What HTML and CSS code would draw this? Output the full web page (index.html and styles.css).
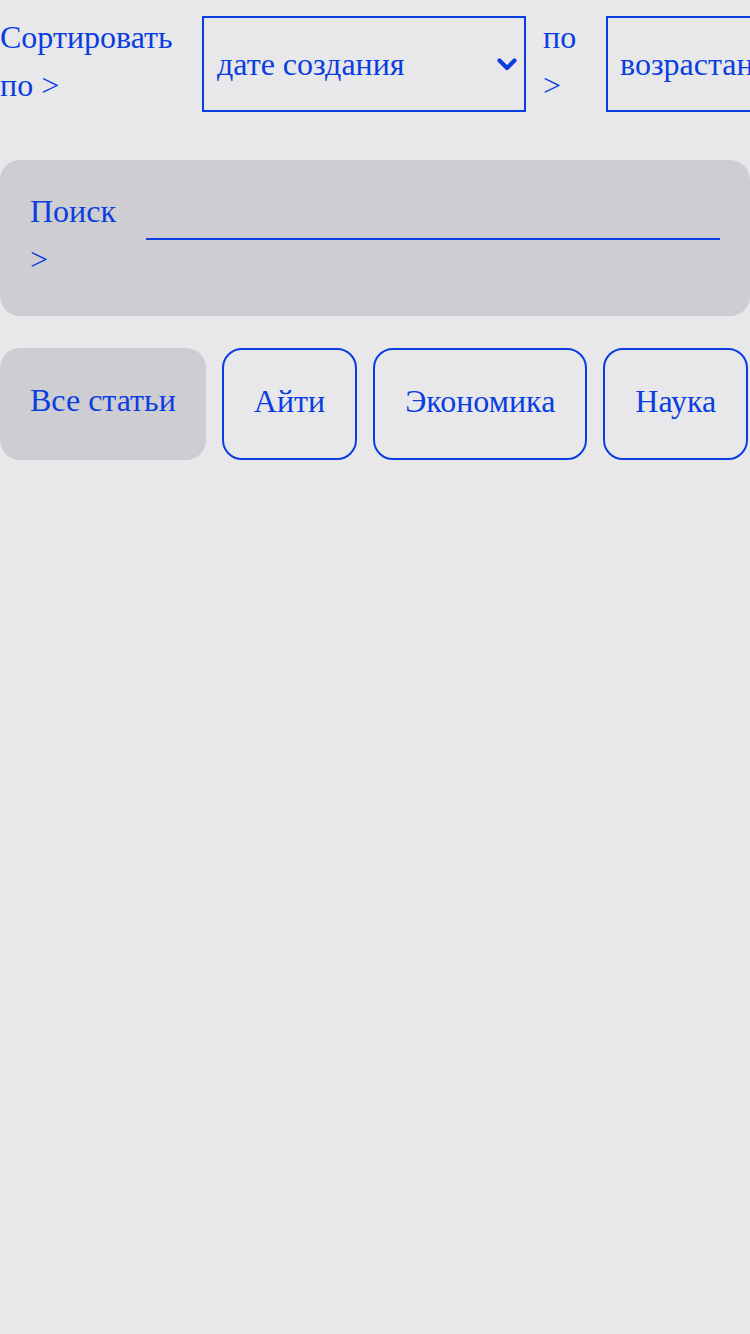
FILE: index.html
```html
<!DOCTYPE html>
<html lang="ru">
<head>
<meta charset="utf-8">
<title>Статьи</title>
<link rel="stylesheet" href="styles.css">
</head>
<body>
<div class="page">
  <div class="sort-row">
    <span class="sort-label">Сортировать по &gt;</span>
    <div class="select select-field">
      <span class="select-text">дате создания</span>
      <svg class="chevron" width="20" height="14" viewBox="0 0 20 14"><polyline points="2.5,2.5 10,10 17.5,2.5" fill="none" stroke="#0a3ee0" stroke-width="4.2" stroke-linecap="round" stroke-linejoin="round"/></svg>
    </div>
    <span class="sort-label by-label">по &gt;</span>
    <div class="select select-order">
      <span class="select-text">возрастанию</span>
    </div>
  </div>

  <div class="search">
    <span class="search-label">Поиск &gt;</span>
    <div class="search-input"></div>
  </div>

  <div class="tags">
    <button class="tag tag-active">Все статьи</button>
    <button class="tag">Айти</button>
    <button class="tag">Экономика</button>
    <button class="tag">Наука</button>
  </div>
</div>
</body>
</html>
```

FILE: styles.css
```css
html, body {
  margin: 0;
  padding: 0;
  background: #e8e8ea;
}
body {
  font-family: "Liberation Serif", "Times New Roman", serif;
  font-size: 32px;
  line-height: 48px;
  color: #0a3ee0;
  overflow: hidden;
}
.page {
  width: 750px;
  overflow: hidden;
}
.sort-row {
  display: flex;
  align-items: flex-start;
  height: 128px;
  overflow: hidden;
}
.sort-label {
  padding-top: 13px;
  flex-shrink: 0;
}
.sort-label:first-child {
  width: 174px;
}
.by-label {
  width: 34px;
  margin-left: 17px;
}
.select {
  box-sizing: border-box;
  height: 96px;
  margin-top: 16px;
  border: 2px solid #0a3ee0;
  display: flex;
  align-items: center;
  padding-left: 13px;
  flex-shrink: 0;
  white-space: nowrap;
}
.select-field {
  width: 324px;
  margin-left: 28px;
  padding-right: 7px;
  justify-content: space-between;
}
.chevron {
  display: block;
  margin-top: 2px;
}
.select-order {
  width: 324px;
  margin-left: 29px;
  padding-left: 12px;
}
.search {
  margin-top: 32px;
  background: #cecdd2;
  border-radius: 20px;
  display: flex;
  align-items: flex-start;
  padding: 27px 30px 33px 30px;
  gap: 30px;
}
.search-label {
  width: 86px;
}
.search-input {
  flex: 1;
  height: 51px;
  border-bottom: 2px solid #0a3ee0;
}
.tags {
  margin-top: 32px;
  display: flex;
  gap: 16px;
}
.tag {
  font: inherit;
  color: inherit;
  background: transparent;
  border: 2px solid #0a3ee0;
  border-radius: 20px;
  height: 112px;
  padding: 0 30px 6px 30px;
  line-height: 48px;
  flex-shrink: 0;
  white-space: nowrap;
}
.tag-active {
  background: #cecdd2;
  border: none;
  padding-bottom: 8px;
}
```
